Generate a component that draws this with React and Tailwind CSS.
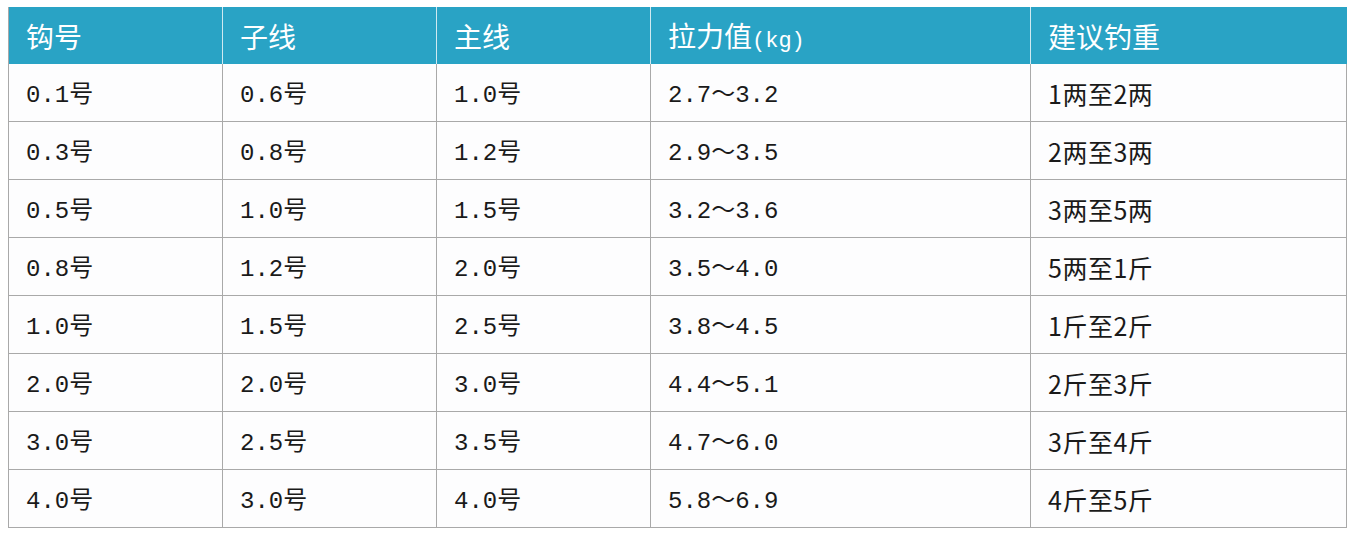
const rows = [
  ["0.1号", "0.6号", "1.0号", "2.7～3.2", "1两至2两"],
  ["0.3号", "0.8号", "1.2号", "2.9～3.5", "2两至3两"],
  ["0.5号", "1.0号", "1.5号", "3.2～3.6", "3两至5两"],
  ["0.8号", "1.2号", "2.0号", "3.5～4.0", "5两至1斤"],
  ["1.0号", "1.5号", "2.5号", "3.8～4.5", "1斤至2斤"],
  ["2.0号", "2.0号", "3.0号", "4.4～5.1", "2斤至3斤"],
  ["3.0号", "2.5号", "3.5号", "4.7～6.0", "3斤至4斤"],
  ["4.0号", "3.0号", "4.0号", "5.8～6.9", "4斤至5斤"],
];

const mono = "font-['Liberation_Mono','Noto_Sans_CJK_SC',monospace]";
const cjk = "font-['Noto_Sans_CJK_SC',sans-serif]";

export default function App() {
  return (
    <div className="min-h-[540px] w-[1362px] bg-white pl-2 pt-[7px]">
      <div className="grid w-max grid-cols-[214px_214px_214px_380px_316px] border-l border-[#a9a9a9]">
        {/* header */}
        <div className={`flex h-[57px] items-center border-r border-[#cfe9f1] bg-[#29a3c5] pl-[17px] text-[28px] text-white ${cjk}`}>
          钩号
        </div>
        <div className={`flex h-[57px] items-center border-r border-[#cfe9f1] bg-[#29a3c5] pl-[17px] text-[28px] text-white ${cjk}`}>
          子线
        </div>
        <div className={`flex h-[57px] items-center border-r border-[#cfe9f1] bg-[#29a3c5] pl-[17px] text-[28px] text-white ${cjk}`}>
          主线
        </div>
        <div className={`flex h-[57px] items-center border-r border-[#cfe9f1] bg-[#29a3c5] pl-[17px] text-[28px] text-white ${cjk}`}>
          <span>
            拉力值<span className={`${mono} text-[22px]`}>(kg)</span>
          </span>
        </div>
        <div className={`flex h-[57px] items-center border-r border-[#29a3c5] bg-[#29a3c5] pl-[17px] text-[28px] text-white ${cjk}`}>
          建议钓重
        </div>

        {rows.map((r, i) =>
          r.map((c, j) => (
            <div
              key={i + "-" + j}
              className={`flex h-[58px] items-center border-r border-b border-[#a9a9a9] bg-[#fdfdfe] pl-[17px] text-[#1a1a1a] ${
                j === 4 ? `${cjk} pt-[3px] text-[25px] tracking-[0.5px]` : `${mono} pt-[6px] text-[24px]`
              }`}
            >
              {c}
            </div>
          ))
        )}
      </div>
    </div>
  );
}
